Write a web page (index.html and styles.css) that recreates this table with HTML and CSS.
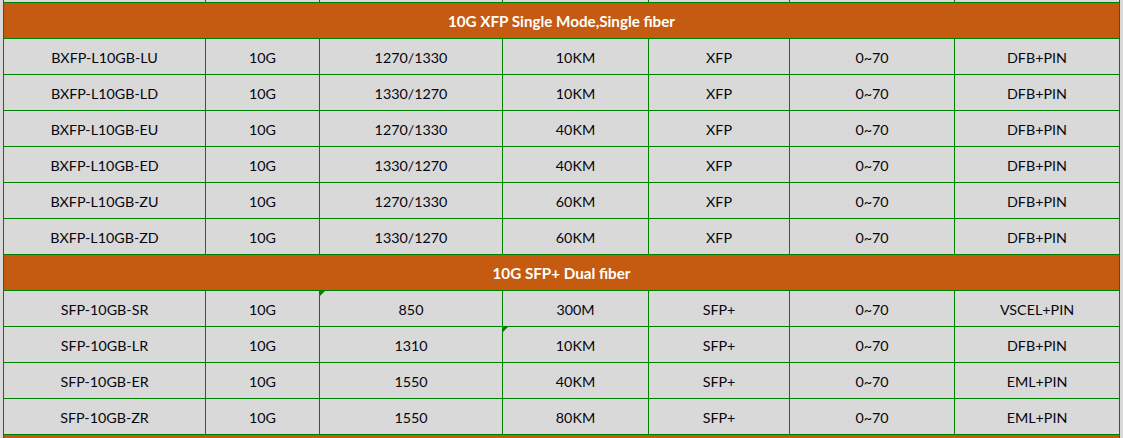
FILE: index.html
```html
<!DOCTYPE html>
<html>
<head>
<meta charset="utf-8">
<link rel="stylesheet" href="styles.css">
<title>10G modules</title>
</head>
<body>
<div class="sheet">
  <div class="cell edge"></div><div class="cell edge"></div><div class="cell edge"></div><div class="cell edge"></div><div class="cell edge"></div><div class="cell edge"></div><div class="cell edge"></div>

  <div class="head">10G XFP Single Mode,Single fiber</div>

  <div class="cell">BXFP-L10GB-LU</div><div class="cell">10G</div><div class="cell">1270/1330</div><div class="cell">10KM</div><div class="cell">XFP</div><div class="cell">0~70</div><div class="cell">DFB+PIN</div>
  <div class="cell">BXFP-L10GB-LD</div><div class="cell">10G</div><div class="cell">1330/1270</div><div class="cell">10KM</div><div class="cell">XFP</div><div class="cell">0~70</div><div class="cell">DFB+PIN</div>
  <div class="cell">BXFP-L10GB-EU</div><div class="cell">10G</div><div class="cell">1270/1330</div><div class="cell">40KM</div><div class="cell">XFP</div><div class="cell">0~70</div><div class="cell">DFB+PIN</div>
  <div class="cell">BXFP-L10GB-ED</div><div class="cell">10G</div><div class="cell">1330/1270</div><div class="cell">40KM</div><div class="cell">XFP</div><div class="cell">0~70</div><div class="cell">DFB+PIN</div>
  <div class="cell">BXFP-L10GB-ZU</div><div class="cell">10G</div><div class="cell">1270/1330</div><div class="cell">60KM</div><div class="cell">XFP</div><div class="cell">0~70</div><div class="cell">DFB+PIN</div>
  <div class="cell">BXFP-L10GB-ZD</div><div class="cell">10G</div><div class="cell">1330/1270</div><div class="cell">60KM</div><div class="cell">XFP</div><div class="cell">0~70</div><div class="cell">DFB+PIN</div>

  <div class="head">10G SFP+ Dual fiber</div>

  <div class="cell">SFP-10GB-SR</div><div class="cell">10G</div><div class="cell flag">850</div><div class="cell">300M</div><div class="cell">SFP+</div><div class="cell">0~70</div><div class="cell">VSCEL+PIN</div>
  <div class="cell">SFP-10GB-LR</div><div class="cell">10G</div><div class="cell">1310</div><div class="cell flag">10KM</div><div class="cell">SFP+</div><div class="cell">0~70</div><div class="cell">DFB+PIN</div>
  <div class="cell">SFP-10GB-ER</div><div class="cell">10G</div><div class="cell">1550</div><div class="cell">40KM</div><div class="cell">SFP+</div><div class="cell">0~70</div><div class="cell">EML+PIN</div>
  <div class="cell">SFP-10GB-ZR</div><div class="cell">10G</div><div class="cell">1550</div><div class="cell">80KM</div><div class="cell">SFP+</div><div class="cell">0~70</div><div class="cell">EML+PIN</div>

  <div class="head tail"></div>
</div>
</body>
</html>
```
FILE: styles.css
```css
html, body {
  margin: 0;
  padding: 0;
  background: #d9d9d9;
}

.sheet {
  display: grid;
  grid-template-columns: 201px 113px 182px 145px 140px 164px 164px;
  grid-template-rows: 2px repeat(12, 35px) 3px;
  gap: 1px;
  background: #008000;
  padding: 0 1px;
  margin-left: 3px;
  width: max-content;
  font-family: Lato, "Open Sans", sans-serif;
  font-size: 14.3px;
  color: #05050f;
}

.cell {
  background: #d9d9d9;
  display: flex;
  align-items: center;
  justify-content: center;
  padding-top: 1px;
  box-sizing: border-box;
  position: relative;
  white-space: nowrap;
}

.cell.edge {
  padding: 0;
}

.head {
  grid-column: 1 / -1;
  background: #c55a11;
  color: #ffffff;
  font-size: 15.2px;
  font-weight: bold;
  display: flex;
  align-items: center;
  justify-content: center;
  white-space: nowrap;
}

.flag::before {
  content: "";
  position: absolute;
  left: 0;
  top: 0;
  border-top: 5px solid #008000;
  border-right: 5px solid transparent;
}
```
